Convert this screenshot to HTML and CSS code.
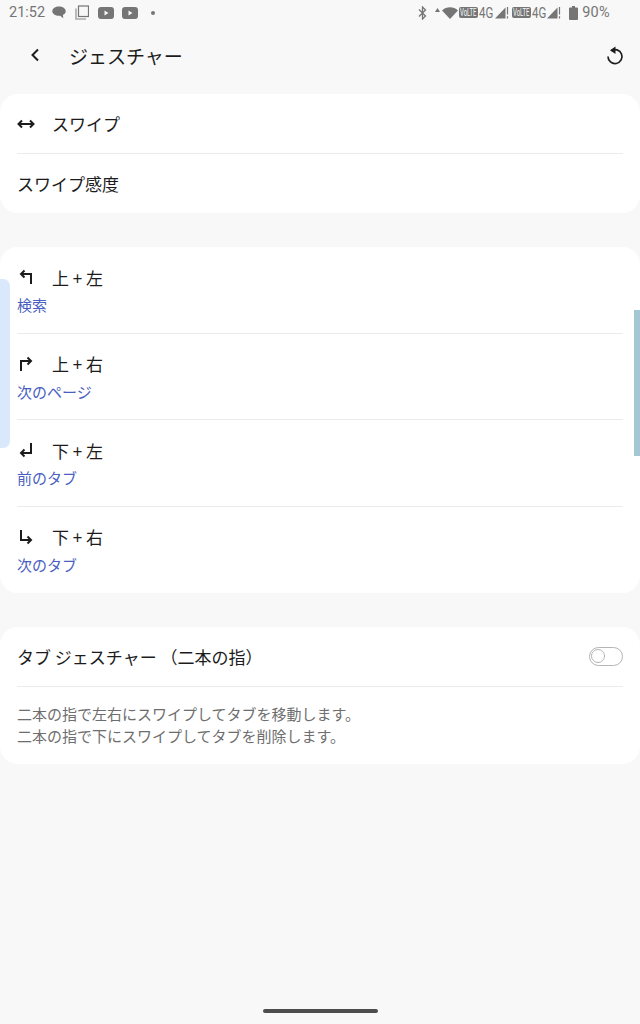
FILE: index.html
```html
<!doctype html>
<html lang="ja">
  <head>
    <meta charset="UTF-8" />
    <meta name="viewport" content="width=device-width, initial-scale=1.0" />
    <title>ジェスチャー</title>
    <link rel="stylesheet" href="styles.css">
  </head>
  <body>
    <div class="status-bar">
      <span class="time">21:52</span>
      <svg class="st-icon" width="14" height="13" viewBox="0 0 14 13"><path d="M7 .5c3.600 0 6.700 2 6.700 4.800 0 1.700-1.100 3-2.800 3.800l.4 3.100-3.200-2.400H7C3.400 9.800.3 8 .3 5.300.3 2.500 3.400.5 7 .5z" fill="#757575"/></svg>
      <svg class="st-icon gap-a" width="14" height="15" viewBox="0 0 14 15"><rect x="3.500" y="1" width="10" height="10.500" fill="none" stroke="#757575" stroke-width="1.200"/><path d="M1 3.500V14h10" fill="none" stroke="#ababab" stroke-width="1.600"/></svg>
      <svg class="st-icon gap-b" width="16" height="12" viewBox="0 0 16 12"><rect width="16" height="12" rx="3" fill="#757575"/><path d="M6.500 3.500l4 2.500-4 2.500z" fill="#f8f8f8"/></svg>
      <svg class="st-icon gap-c" width="16" height="12" viewBox="0 0 16 12"><rect width="16" height="12" rx="3" fill="#757575"/><path d="M6.500 3.500l4 2.500-4 2.500z" fill="#f8f8f8"/></svg>
      <span class="st-dot"></span>

      <div class="status-right">
        <svg class="bt" width="9" height="14" viewBox="0 0 9 14"><path d="M1 3.500l6.500 6.500L4.500 13V1l3 3L1 10.500" fill="none" stroke="#757575" stroke-width="1.300"/></svg>
        <svg class="up" width="5" height="4" viewBox="0 0 5 4"><path d="M2.500 0L5 4H0z" fill="#757575"/></svg>
        <svg class="wifi" width="16" height="12" viewBox="0 0 16 12"><path d="M0 3.500C4.500-.8 11.500-.8 16 3.500L8 12z" fill="#757575"/></svg>
        <span class="volte"><span class="volte-text">VoLTE</span></span>
        <span class="net">4G</span>
        <svg class="signal" width="14" height="13" viewBox="0 0 14 13"><path d="M0 12.500L10.500 1.500v11z" fill="#757575"/><path d="M12.500 1v7.500M12.500 10.300v2.200" stroke="#757575" stroke-width="1.200"/></svg>
        <span class="volte second"><span class="volte-text">VoLTE</span></span>
        <span class="net">4G</span>
        <svg class="signal" width="14" height="13" viewBox="0 0 14 13"><path d="M0 12.500L10.500 1.500v11z" fill="#757575"/><path d="M12.500 1v7.500M12.500 10.300v2.200" stroke="#757575" stroke-width="1.200"/></svg>
        <svg class="battery" width="9" height="14" viewBox="0 0 9 14"><path d="M3 0h3v1.500h2a1 1 0 0 1 1 1V13a1 1 0 0 1-1 1H1a1 1 0 0 1-1-1V2.500a1 1 0 0 1 1-1h2z" fill="#757575"/></svg>
        <span class="percent">90%</span>
      </div>
    </div>

    <header class="toolbar">
      <svg class="back" width="10" height="14" viewBox="0 0 10 14"><path d="M8 1.500L2.500 7 8 12.500" fill="none" stroke="#1c1c1c" stroke-width="2"/></svg>
      <h1 class="title">ジェスチャー</h1>
      <svg class="reset" width="18" height="19" viewBox="0 0 18 19"><path d="M5.200 4.700A7 7 0 1 1 2 10.500" fill="none" stroke="#1c1c1c" stroke-width="1.700"/><path d="M9.500 0.500v7.500L4 4.300z" fill="#1c1c1c"/></svg>
    </header>

    <section class="card">
      <div class="row short">
        <svg class="gesture" width="18" height="12" viewBox="0 0 18 12"><path d="M1.500 6h15M5 2.500L1.500 6 5 9.500M13 2.500L16.500 6 13 9.500" fill="none" stroke="#1c1c1c" stroke-width="2"/></svg>
        <span class="label">スワイプ</span>
      </div>
      <div class="row short">
        <span class="label">スワイプ感度</span>
      </div>
    </section>

    <section class="card">
      <div class="row tall">
        <div class="line">
          <svg class="gesture" width="18" height="16" viewBox="0 0 18 16"><path d="M14 15V5H4M7.500 1.500L4 5l3.500 3.500" fill="none" stroke="#1c1c1c" stroke-width="2"/></svg>
          <span class="label">上 + 左</span>
        </div>
        <div class="sub">検索</div>
      </div>
      <div class="row tall">
        <div class="line">
          <svg class="gesture" width="18" height="16" viewBox="0 0 18 16"><path d="M4 15V5h10M10.500 1.500L14 5l-3.500 3.500" fill="none" stroke="#1c1c1c" stroke-width="2"/></svg>
          <span class="label">上 + 右</span>
        </div>
        <div class="sub">次のページ</div>
      </div>
      <div class="row tall">
        <div class="line">
          <svg class="gesture" width="18" height="16" viewBox="0 0 18 16"><path d="M14 1v10H4M7.500 7.500L4 11l3.500 3.500" fill="none" stroke="#1c1c1c" stroke-width="2"/></svg>
          <span class="label">下 + 左</span>
        </div>
        <div class="sub">前のタブ</div>
      </div>
      <div class="row tall">
        <div class="line">
          <svg class="gesture" width="18" height="16" viewBox="0 0 18 16"><path d="M4 1v10h10M10.500 7.500L14 11l-3.500 3.500" fill="none" stroke="#1c1c1c" stroke-width="2"/></svg>
          <span class="label">下 + 右</span>
        </div>
        <div class="sub">次のタブ</div>
      </div>
    </section>

    <section class="card">
      <div class="row short toggle-row">
        <span class="label">タブ ジェスチャー （二本の指）</span>
        <span class="switch"><span class="knob"></span></span>
      </div>
      <div class="row note">
        <p>二本の指で左右にスワイプしてタブを移動します。</p>
        <p>二本の指で下にスワイプしてタブを削除します。</p>
      </div>
    </section>

    <div class="edge-left"></div>
    <div class="edge-right"></div>
    <div class="home-bar"></div>
  </body>
</html>
```

FILE: styles.css
```css
* {
  margin: 0;
  padding: 0;
  box-sizing: border-box;
}

body {
  font-family: "Noto Sans CJK JP", "Noto Sans", sans-serif;
  background: #f8f8f8;
  color: #1c1c1c;
  width: 640px;
  height: 1024px;
  overflow: hidden;
  position: relative;
}

.status-bar {
  height: 24px;
  padding: 1px 0 0 9px;
  display: flex;
  align-items: center;
  font-family: Roboto, sans-serif;
  color: #757575;
}

.time {
  font-size: 14.500px;
  width: 43px;
}

.gap-a {
  margin-left: 9px;
}

.gap-b {
  margin-left: 9px;
}

.gap-c {
  margin-left: 8px;
}

.st-dot {
  width: 4px;
  height: 4px;
  border-radius: 50%;
  background: #757575;
  margin-left: 13px;
}

.status-right {
  margin-left: auto;
  padding-right: 30px;
  display: flex;
  align-items: center;
}

.up {
  margin: 0 0 5px 8px;
}

.wifi {
  margin-left: 2px;
}

.volte {
  display: flex;
  align-items: center;
  flex: none;
  width: 19px;
  height: 11px;
  margin-left: 1px;
  border-radius: 2px;
  background: #757575;
}

.volte-text {
  flex: none;
  font-size: 10px;
  line-height: 11px;
  color: #f8f8f8;
  margin: 0 -10px 0 1px;
  transform: scaleX(0.6);
  transform-origin: left center;
}

.second {
  margin-left: 3px;
}

.net {
  flex: none;
  font-size: 14px;
  margin: 0 -2px 0 1px;
  transform: scaleX(0.82);
  transform-origin: left center;
  white-space: nowrap;
}

.battery {
  margin-left: 8px;
}

.percent {
  font-size: 14.500px;
  margin-left: 4px;
  letter-spacing: 0.3px;
}

.toolbar {
  height: 62px;
  display: flex;
  align-items: center;
  padding: 0 16px 0 30px;
}

.back {
  flex: none;
}

.title {
  font-size: 19px;
  font-weight: 400;
  margin-left: 29px;
}

.reset {
  margin-left: auto;
}

.card {
  background: #fff;
  border-radius: 18px;
  margin-top: 8px;
  margin-bottom: 34px;
}

.card + .card {
  margin-top: 0;
}

.row {
  margin: 0 17px;
  border-bottom: 1px solid #ebebeb;
}

.row:last-child {
  border-bottom: none;
}

.short {
  height: 60px;
  display: flex;
  align-items: center;
}

.short:last-child {
  height: 59px;
}

.tall {
  height: 86.500px;
  padding-top: 17px;
}

.line {
  display: flex;
  align-items: center;
  height: 26px;
}

.gesture {
  flex: none;
  margin-right: 17px;
}

.label {
  font-size: 17px;
}

.sub {
  font-size: 15px;
  color: #4a5fc1;
  line-height: 20px;
  margin-top: 5px;
}

.toggle-row {
  justify-content: space-between;
}

.switch {
  width: 34px;
  height: 19px;
  border: 1.500px solid #b5b5b5;
  border-radius: 10px;
  padding: 1px;
  display: block;
}

.knob {
  display: block;
  width: 14px;
  height: 14px;
  border: 1.500px solid #b5b5b5;
  border-radius: 50%;
}

.note {
  padding-top: 16px;
  height: 77px;
  font-size: 15px;
  line-height: 22px;
  color: #6e6e6e;
}

.edge-left {
  position: absolute;
  left: 0;
  top: 279px;
  width: 10px;
  height: 169px;
  background: #d9e9fb;
  border-radius: 0 7px 7px 0;
}

.edge-right {
  position: absolute;
  right: 0;
  top: 310px;
  width: 6px;
  height: 146px;
  background: #a5c6d3;
}

.home-bar {
  position: absolute;
  left: 263px;
  top: 1009px;
  width: 115px;
  height: 4px;
  border-radius: 2px;
  background: #4d4d4d;
}
```
